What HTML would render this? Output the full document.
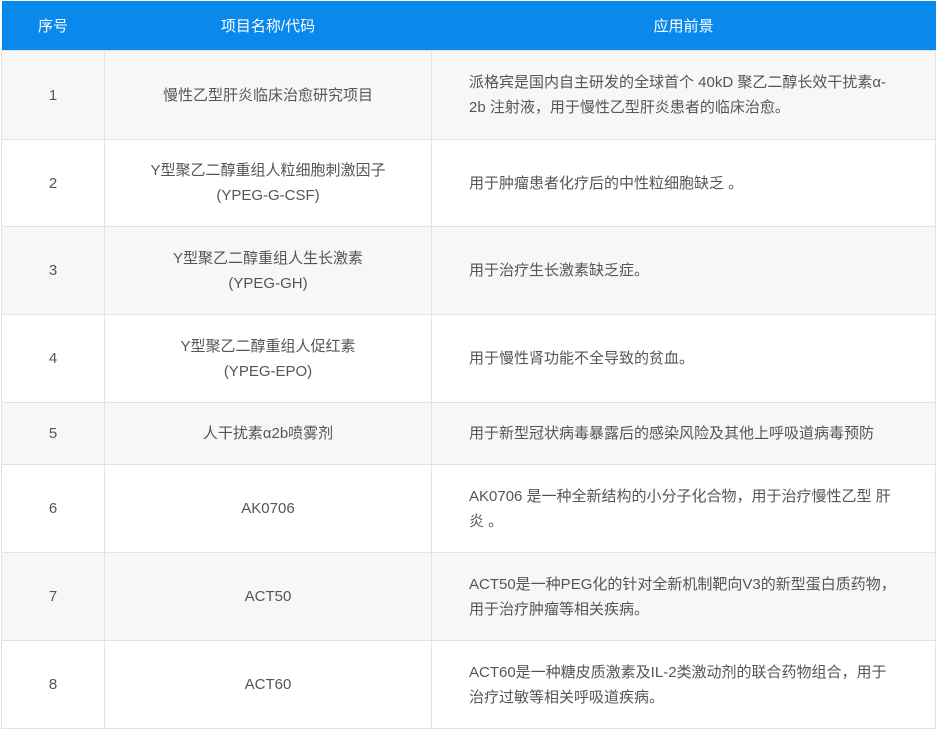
<!DOCTYPE html>
<html><head><meta charset="utf-8"><style>
body{margin:0;width:936px;height:728px;overflow:hidden;background:#fff;font-family:"Liberation Sans","Noto Sans CJK SC",sans-serif;font-size:15px;color:#555}
table{border-collapse:collapse;position:absolute;left:1px;top:1px;width:935px;table-layout:fixed}
th{background:#0a89ec;color:#fff;font-weight:normal;height:49px;font-size:15px;padding:0}
td{border:1px solid #e3e3e3;text-align:center;line-height:25px;padding:0}
td.d{text-align:left;padding:0 30px 0 37px}
tr.g td{background:#f7f7f7}
</style></head><body>
<table>
<colgroup><col style="width:103px"><col style="width:327px"><col></colgroup>
<tr><th>序号</th><th>项目名称/代码</th><th>应用前景</th></tr>
<tr class="g" style="height:89px"><td>1</td><td>慢性乙型肝炎临床治愈研究项目</td><td class="d"><span style="white-space:nowrap">派格宾是国内自主研发的全球首个 40kD 聚乙二醇长效干扰素α-</span><br>2b 注射液，用于慢性乙型肝炎患者的临床治愈。</td></tr>
<tr style="height:87px"><td>2</td><td>Y型聚乙二醇重组人粒细胞刺激因子<br>(YPEG-G-CSF)</td><td class="d">用于肿瘤患者化疗后的中性粒细胞缺乏 。</td></tr>
<tr class="g" style="height:88px"><td>3</td><td>Y型聚乙二醇重组人生长激素<br>(YPEG-GH)</td><td class="d">用于治疗生长激素缺乏症。</td></tr>
<tr style="height:88px"><td>4</td><td>Y型聚乙二醇重组人促红素<br>(YPEG-EPO)</td><td class="d">用于慢性肾功能不全导致的贫血。</td></tr>
<tr class="g" style="height:62px"><td>5</td><td>人干扰素α2b喷雾剂</td><td class="d">用于新型冠状病毒暴露后的感染风险及其他上呼吸道病毒预防</td></tr>
<tr style="height:88px"><td>6</td><td>AK0706</td><td class="d">AK0706 是一种全新结构的小分子化合物，用于治疗慢性乙型 肝<br>炎 。</td></tr>
<tr class="g" style="height:88px"><td>7</td><td>ACT50</td><td class="d">ACT50是一种PEG化的针对全新机制靶向V3的新型蛋白质药物，<br>用于治疗肿瘤等相关疾病。</td></tr>
<tr style="height:88px"><td>8</td><td>ACT60</td><td class="d">ACT60是一种糖皮质激素及IL-2类激动剂的联合药物组合，用于<br>治疗过敏等相关呼吸道疾病。</td></tr>
</table>
</body></html>
